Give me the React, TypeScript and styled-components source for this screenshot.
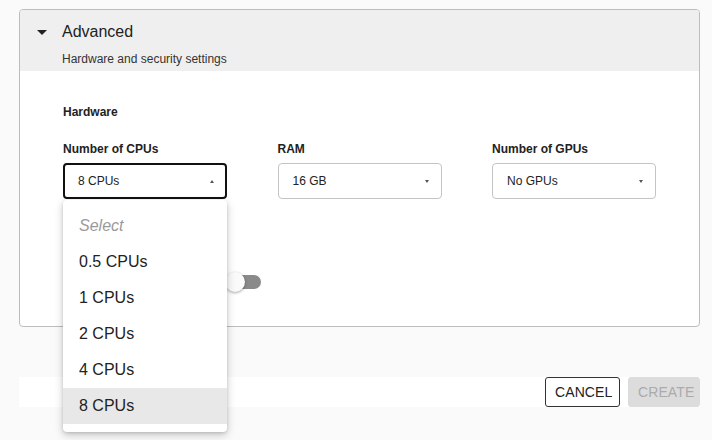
import React from "react";
import styled, { createGlobalStyle } from "styled-components";

const Global = createGlobalStyle`
  html, body { margin: 0; padding: 0; background: #fafafa; }
  body { font-family: "Liberation Sans", Arial, Helvetica, sans-serif; color: #222; }
  * { box-sizing: border-box; }
`;

const Page = styled.div`
  position: relative;
  width: 712px;
  height: 440px;
  overflow: hidden;
  padding: 9px 12px 0 19px;
`;

const Card = styled.section`
  width: 681px;
  height: 318px;
  border: 1px solid #bdbdbd;
  border-radius: 4px;
  background: #fff;
  overflow: hidden;
`;

const Header = styled.div`
  height: 61px;
  background: #efefef;
  display: grid;
  grid-template-columns: 42px 1fr;
  grid-template-rows: auto auto;
  padding-top: 13px;
`;

const Caret = styled.span`
  justify-self: start;
  margin-left: 17px;
  margin-top: 7px;
  width: 0;
  height: 0;
  border-left: 5px solid transparent;
  border-right: 5px solid transparent;
  border-top: 5px solid #222;
`;

const Title = styled.div`
  font-size: 16px;
  line-height: 18px;
  color: #222;
`;

const Subtitle = styled.div`
  grid-column: 2;
  font-size: 12px;
  line-height: 14px;
  margin-top: 6px;
  color: #333;
`;

const Body = styled.div`
  padding: 34px 0 0 43px;
`;

const SectionTitle = styled.div`
  font-size: 12px;
  font-weight: bold;
  line-height: 14px;
  color: #222;
`;

const Fields = styled.div`
  display: grid;
  grid-template-columns: 164px 164px 164px;
  column-gap: 50.5px;
  margin-top: 23px;
`;

const Field = styled.div`
  display: flex;
  flex-direction: column;
`;

const Label = styled.div`
  font-size: 12px;
  font-weight: bold;
  line-height: 14px;
  color: #222;
  margin-bottom: 7px;
`;

const SelectBox = styled.div<{ $focused?: boolean }>`
  height: 36px;
  border: ${(p) => (p.$focused ? "2px solid #111" : "1px solid #c4c4c4")};
  border-radius: 4px;
  background: #fff;
  display: flex;
  align-items: center;
  justify-content: space-between;
  padding: 0 ${(p) => (p.$focused ? "11px 0 13px" : "12px 0 14px")};
  font-size: 12px;
  color: #222;
`;

const Arrow = styled.span<{ $up?: boolean }>`
  width: 0;
  height: 0;
  border-left: 2.5px solid transparent;
  border-right: 2.5px solid transparent;
  ${(p) => (p.$up ? "border-bottom: 3px solid #555;" : "border-top: 3px solid #555;")}
`;

const SecurityRow = styled.div`
  display: flex;
  align-items: center;
  margin-top: 76px;
  font-size: 14px;
`;

const Switch = styled.span`
  position: relative;
  margin-left: 162px;
  width: 36px;
  height: 14px;
  border-radius: 7px;
  background: #8a8a8a;
`;

const Thumb = styled.span`
  position: absolute;
  left: 0;
  top: -3px;
  width: 20px;
  height: 20px;
  border-radius: 50%;
  background: #fafafa;
  box-shadow: 0 1px 3px rgba(0, 0, 0, 0.35);
`;

const Footer = styled.div`
  margin-top: 50px;
  height: 30px;
  width: 681px;
  background: #fff;
  display: flex;
  justify-content: flex-end;
  gap: 8px;
`;

const Button = styled.button<{ $disabled?: boolean }>`
  height: 30px;
  padding: 0 9px;
  font-family: inherit;
  font-size: 14px;
  letter-spacing: 0.1px;
  border-radius: 3px;
  border: ${(p) => (p.$disabled ? "1px solid #dcdcdc" : "1px solid #333")};
  background: ${(p) => (p.$disabled ? "#dcdcdc" : "#fff")};
  color: ${(p) => (p.$disabled ? "#ababab" : "#222")};
  width: ${(p) => (p.$disabled ? "72px" : "75px")};
`;

const Menu = styled.ul`
  position: absolute;
  left: 63px;
  top: 200px;
  width: 164px;
  margin: 0;
  padding: 8px 0;
  list-style: none;
  background: #fff;
  border-radius: 4px;
  box-shadow: 0 3px 8px rgba(0, 0, 0, 0.22), 0 1px 3px rgba(0, 0, 0, 0.12);
`;

const MenuItem = styled.li<{ $placeholder?: boolean; $selected?: boolean }>`
  height: 36px;
  display: flex;
  align-items: center;
  padding-left: 16px;
  font-size: 16px;
  color: ${(p) => (p.$placeholder ? "#9a9a9a" : "#222")};
  font-style: ${(p) => (p.$placeholder ? "italic" : "normal")};
  background: ${(p) => (p.$selected ? "#e8e8e8" : "transparent")};
`;

const options = ["0.5 CPUs", "1 CPUs", "2 CPUs", "4 CPUs", "8 CPUs"];

export default function App() {
  return (
    <>
      <Global />
      <Page>
        <Card>
          <Header>
            <Caret />
            <Title>Advanced</Title>
            <Subtitle>Hardware and security settings</Subtitle>
          </Header>
          <Body>
            <SectionTitle>Hardware</SectionTitle>
            <Fields>
              <Field>
                <Label>Number of CPUs</Label>
                <SelectBox $focused>
                  8 CPUs
                  <Arrow $up />
                </SelectBox>
              </Field>
              <Field>
                <Label>RAM</Label>
                <SelectBox>
                  16 GB
                  <Arrow />
                </SelectBox>
              </Field>
              <Field>
                <Label>Number of GPUs</Label>
                <SelectBox>
                  No GPUs
                  <Arrow />
                </SelectBox>
              </Field>
            </Fields>
            <SecurityRow>
              <Switch>
                <Thumb />
              </Switch>
            </SecurityRow>
          </Body>
        </Card>
        <Footer>
          <Button>CANCEL</Button>
          <Button $disabled>CREATE</Button>
        </Footer>
        <Menu>
          <MenuItem $placeholder>Select</MenuItem>
          {options.map((o) => (
            <MenuItem key={o} $selected={o === "8 CPUs"}>
              {o}
            </MenuItem>
          ))}
        </Menu>
      </Page>
    </>
  );
}
